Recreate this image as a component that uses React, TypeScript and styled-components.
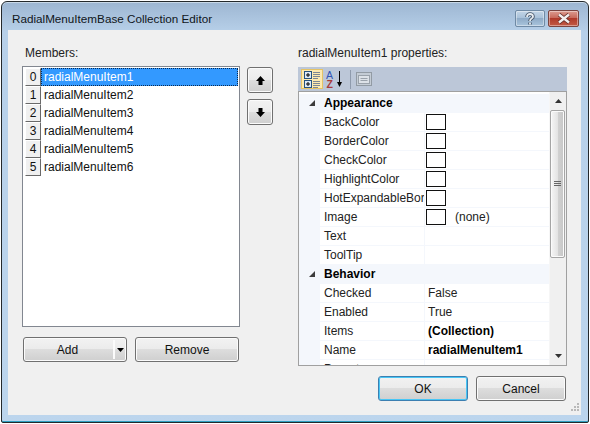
import React from "react";
import styled, { createGlobalStyle } from "styled-components";

const Global = createGlobalStyle`
  html, body { margin: 0; padding: 0; background: #fff; }
  body { width: 590px; height: 424px; overflow: hidden; font-family: "Liberation Sans", Arial, sans-serif; font-size: 12px; color: #000; }
  #root { padding: 1px; width: 588px; height: 422px; }
  * { box-sizing: border-box; }
`;

const Window = styled.div`
  width: 588px; height: 422px;
  display: flex; flex-direction: column;
  border: 1px solid #24292c;
  border-radius: 6px 6px 2px 2px;
  padding: 0 7px 7px 6px;
  background: linear-gradient(180deg, #9db6d2 0, #b7d0e9 30px, #bcd5ed 100%);
  box-shadow: inset 0 1px 0 #c9d9e8, inset 0 -1px 0 #2f9fc0;
`;
const TitleBar = styled.header`
  height: 28px; display: flex; align-items: flex-start; justify-content: space-between;
  padding: 0 0 0 4px;
`;
const Title = styled.h1`
  margin: 9px 0 0; font: 400 11.7px/15px "Liberation Sans", Arial, sans-serif; color: #10151a;
`;
const Caption = styled.div`
  display: flex; gap: 3px; margin-top: 8px; margin-right: 2px;
`;
const CaptionBtn = styled.div<{ $close?: boolean }>`
  width: ${p => (p.$close ? 31 : 30)}px; height: 17px; border-radius: 2px;
  border: 1px solid ${p => (p.$close ? "#7a4440" : "#6f8aa5")};
  box-shadow: inset 0 0 0 1px rgba(255,255,255,.4);
  background: ${p => p.$close
    ? "linear-gradient(180deg,#dc9c90 0,#c96a5c 45%,#b03a2a 50%,#c25a45 100%)"
    : "linear-gradient(180deg,#c3d5e6 0,#a9c2da 45%,#8fabc7 50%,#a9c4dc 100%)"};
  display: flex; align-items: center; justify-content: center;
`;

const Client = styled.main`
  position: relative; flex: 1; background: #f0f0f0; padding: 15px 14px 0;
  display: grid; grid-template-columns: 218px 26px 269px; column-gap: 7px;
  grid-template-rows: 21px auto;
`;
const Label = styled.div`
  padding-top: 1px; line-height: 14px; white-space: nowrap; color: #222;
`;
const MembersLabel = styled(Label)`
  padding-left: 3px;
`;
const LeftCol = styled.section`
  grid-row: 1 / 3; display: flex; flex-direction: column;
`;
const MidCol = styled.section`
  grid-row: 1 / 3; padding-top: 22px; display: flex; flex-direction: column; gap: 6px;
`;
const RightCol = styled.section`
  grid-row: 1 / 3; margin-left: 18px; width: 269px; display: flex; flex-direction: column;
`;
const ListBox = styled.div`
  margin-top: 6px; height: 261px; background: #fff; border: 1px solid #828790; padding: 1px;
`;
const ListRow = styled.div`
  display: flex; height: 18px;
`;
const RowHead = styled.div`
  width: 16px; height: 18px; background: #f0f0f0;
  border: 1px solid; border-color: #fff #696969 #696969 #fff;
  display: flex; align-items: center; justify-content: center; font-size: 12px; color: #111;
  margin-left: 1px;
`;
const ItemText = styled.div<{ $sel?: boolean }>`
  flex: 1; padding-left: 2px; line-height: 16px;
  border: 1px ${p => (p.$sel ? "dotted #0a2a50" : "solid transparent")};
  background: ${p => (p.$sel ? "#3399ff" : "transparent")};
  color: ${p => (p.$sel ? "#fff" : "#111")};
`;
const Btn = styled.button<{ $w?: number; $focus?: boolean }>`
  position: relative;
  width: ${p => p.$w ?? 90}px; height: 25px; padding: 0; margin: 0;
  font: 12px "Liberation Sans", Arial, sans-serif; color: #111;
  border: 1px solid ${p => (p.$focus ? "#3c7fb1" : "#707070")};
  border-radius: 3px;
  background: linear-gradient(180deg, #f2f2f2 0, #ebebeb 50%, #dddddd 50%, #cfcfcf 100%);
  box-shadow: inset 0 0 0 1px ${p => (p.$focus ? "#48c6f5" : "#fbfbfb")};
  display: flex; align-items: center; justify-content: center;
`;
const ArrowBtn = styled(Btn)`
  width: 26px; height: 26px;
`;
const ButtonRow = styled.div`
  margin-top: 10px; padding-left: 1px; display: flex; gap: 8px;
`;
const AddLabel = styled.span`
  padding-right: 15px;
`;
const SplitArea = styled.span`
  position: absolute; right: 1px; top: 2px; bottom: 2px; width: 12px;
  border-left: 2px solid #fbfbfb; display: flex; align-items: center; justify-content: center;
`;
const Toolbar = styled.div`
  margin-top: 7px; height: 25px; background: #bcc7d8; border-bottom: 1px solid #a0a0a0;
  display: flex; align-items: center; padding: 0 0 0 3px;
`;
const ToolActive = styled.div`
  width: 22px; height: 20px; background: #fdeab0; border: 1px solid #e5c365;
  display: flex; align-items: center; justify-content: center;
`;
const ToolIcon = styled.div`
  width: 24px; height: 21px; display: flex; align-items: center; justify-content: center;
`;
const ToolSep = styled.div`
  width: 1px; height: 19px; background: #8f9bad; margin: 0 1px 0 3px;
`;
const Grid = styled.div`
  height: 274px; display: flex; background: #fff; border: 1px solid #a0a0a0; border-top: 0; overflow: hidden;
`;
const Rows = styled.div`
  width: 251px; height: 100%; overflow: hidden; padding-top: 2px; background: #fff;
`;
const GridRow = styled.div`
  height: 19px; display: flex; align-items: stretch;
  background: #f4f7fc;
  padding-left: 21px;
`;
const CatRow = styled.div`
  height: 19px; display: flex; align-items: center; background: #f4f7fc; font-weight: 700; color: #000;
  padding-bottom: 2px;
`;
const CatArrow = styled.span`
  width: 25px; display: flex; justify-content: center; padding-top: 1px;
`;
const NameCell = styled.div`
  width: 104px; padding: 0 0 0 4px; margin-bottom: 1px; background: #fff; margin-right: 1px; line-height: 18px;
  white-space: nowrap; overflow: hidden; color: #222;
`;
const ValueCell = styled.div<{ $bold?: boolean }>`
  flex: 1; padding: 0 0 0 3px; margin-bottom: 1px; background: #fff; display: flex; align-items: center;
  font-weight: ${p => (p.$bold ? 700 : 400)}; color: ${p => (p.$bold ? "#000" : "#222")}; white-space: nowrap;
`;
const Swatch = styled.span`
  width: 20px; height: 16px; border: 1px solid #111; background: #fff; margin-left: -2px; margin-right: 9px; flex: none;
`;
const ScrollBar = styled.div`
  width: 17px; background: #f0f0f0; display: flex; flex-direction: column;
  border-left: 1px solid #f6f6f6;
`;
const ScrollArrow = styled.div`
  height: 18px; width: 100%; flex: none; display: flex; align-items: center; justify-content: center;
`;
const Thumb = styled.div`
  width: 15px; height: 148px; border: 1px solid #a5a5a5; border-radius: 2px;
  background: linear-gradient(90deg, #f6f6f6, #e4e4e4 50%, #d2d2d2 50%, #c6c6c6);
  box-shadow: inset 0 0 0 1px #fbfbfb;
  display: flex; align-items: center; justify-content: center;
`;
const Track = styled.div`
  flex: 1;
`;
const Footer = styled.div`
  margin-top: 10px; display: flex; justify-content: flex-end; gap: 8px; padding-right: 1px;
`;
const Grip = styled.svg`
  position: absolute; right: 1px; bottom: 1px;
`;

const Up = () => (
  <svg width="11" height="11" viewBox="0 0 11 11"><path d="M5.5 1 10 6H7.5v4h-4V6H1z" fill="#000" /></svg>
);
const Down = () => (
  <svg width="11" height="11" viewBox="0 0 11 11"><path d="M5.5 10 10 5H7.5V1h-4v4H1z" fill="#000" /></svg>
);
const Tri = () => (
  <svg width="8" height="8" viewBox="0 0 8 8"><path d="M7 1v6H1z" fill="#3c3c3c" /></svg>
);

const CategorizedIcon = () => (
  <svg width="17" height="17" viewBox="0 0 17 17">
    {[0, 9].map(y => (
      <g key={y}>
        <rect x="0.5" y={y + 0.5} width="7" height="7" fill="#dbe9f7" stroke="#24527f" />
        <path d={`M2 ${y + 4}h4M4 ${y + 2}v4`} stroke="#000" fill="none" />
        <path d={`M9 ${y + 1.5}h7M9 ${y + 3.5}h7M9 ${y + 5.5}h7M9 ${y + 7.5}h5`} stroke="#7d8894" fill="none" />
      </g>
    ))}
  </svg>
);
const SortIcon = () => (
  <svg width="18" height="19" viewBox="0 0 18 19">
    <text fontFamily="Liberation Sans" fontSize="10.5">
      <tspan x="0" y="8.5" fill="#2f55b5">A</tspan>
      <tspan x="0.5" y="18" fontWeight="700" fill="#a83a3a">Z</tspan>
    </text>
    <path d="M13.5 1v12" stroke="#000" strokeWidth="1" />
    <path d="M11 12h5l-2.5 5z" fill="#000" />
  </svg>
);
const PagesIcon = () => (
  <svg width="16" height="14" viewBox="0 0 16 14">
    <rect x="0.5" y="0.5" width="15" height="13" fill="#c4ccd5" stroke="#929ba4" />
    <rect x="2.5" y="3.5" width="11" height="8" fill="#dde2e8" stroke="#9aa2ab" />
    <path d="M4.5 6.5h7M4.5 8.5h7" stroke="#9aa2ab" fill="none" />
  </svg>
);

const items = [1, 2, 3, 4, 5, 6];
const appearance: [string, string | null][] = [
  ["BackColor", "s"], ["BorderColor", "s"], ["CheckColor", "s"], ["HighlightColor", "s"],
  ["HotExpandableBor", "s"], ["Image", "i"], ["Text", ""], ["ToolTip", ""],
];
const behavior: [string, string, boolean?][] = [
  ["Checked", "False"], ["Enabled", "True"], ["Items", "(Collection)", true],
  ["Name", "radialMenuItem1", true], ["Parent", "", false],
];

export default function App() {
  return (
    <>
      <Global />
      <Window>
        <TitleBar>
          <Title>RadialMenuItemBase Collection Editor</Title>
          <Caption>
            <CaptionBtn>
              <svg width="12" height="14" viewBox="0 0 12 14">
                <g fill="none" stroke="#48586a" strokeWidth="3.6">
                  <path d="M3 5C3 3 4.5 2 6 2S9 3 9 4.7 6 6.5 6 9" />
                  <path d="M6 10.5v2" />
                </g>
                <g fill="none" stroke="#e6ebf0" strokeWidth="1.8">
                  <path d="M3 5C3 3 4.5 2 6 2S9 3 9 4.7 6 6.5 6 9" />
                  <path d="M6 10.5v2" />
                </g>
              </svg>
            </CaptionBtn>
            <CaptionBtn $close>
              <svg width="16" height="11" viewBox="0 0 16 11">
                <path d="M3 1.5 13 9.5M13 1.5 3 9.5" stroke="#5c2a26" strokeWidth="4" />
                <path d="M3 1.5 13 9.5M13 1.5 3 9.5" stroke="#f3eeee" strokeWidth="2.4" />
              </svg>
            </CaptionBtn>
          </Caption>
        </TitleBar>
        <Client>
          <LeftCol>
            <MembersLabel>Members:</MembersLabel>
            <ListBox>
              {items.map((n, i) => (
                <ListRow key={n}>
                  <RowHead>{i}</RowHead>
                  <ItemText $sel={i === 0}>radialMenuItem{n}</ItemText>
                </ListRow>
              ))}
            </ListBox>
            <ButtonRow>
              <Btn $w={104}>
                <AddLabel>Add</AddLabel>
                <SplitArea>
                  <svg width="7" height="4" viewBox="0 0 7 4"><path d="M0 0h7L3.5 4z" fill="#000" /></svg>
                </SplitArea>
              </Btn>
              <Btn $w={104}>Remove</Btn>
            </ButtonRow>
          </LeftCol>
          <MidCol>
            <ArrowBtn><Up /></ArrowBtn>
            <ArrowBtn><Down /></ArrowBtn>
          </MidCol>
          <RightCol>
            <Label>radialMenuItem1 properties:</Label>
            <Toolbar>
              <ToolActive><CategorizedIcon /></ToolActive>
              <ToolIcon><SortIcon /></ToolIcon>
              <ToolSep />
              <ToolIcon><PagesIcon /></ToolIcon>
            </Toolbar>
            <Grid>
              <Rows>
                <CatRow><CatArrow><Tri /></CatArrow>Appearance</CatRow>
                {appearance.map(([n, v]) => (
                  <GridRow key={n}>
                    <NameCell>{n}</NameCell>
                    <ValueCell>
                      {v ? <Swatch /> : null}
                      {v === "i" ? "(none)" : ""}
                    </ValueCell>
                  </GridRow>
                ))}
                <CatRow><CatArrow><Tri /></CatArrow>Behavior</CatRow>
                {behavior.map(([n, v, b]) => (
                  <GridRow key={n}>
                    <NameCell>{n}</NameCell>
                    <ValueCell $bold={b}>{v}</ValueCell>
                  </GridRow>
                ))}
              </Rows>
              <ScrollBar>
                <ScrollArrow>
                  <svg width="7" height="4" viewBox="0 0 7 4"><path d="M3.5 0 7 4H0z" fill="#333" /></svg>
                </ScrollArrow>
                <Thumb>
                  <svg width="7" height="6" viewBox="0 0 7 6"><path d="M0 .5h7M0 2.5h7M0 4.5h7" stroke="#666" /></svg>
                </Thumb>
                <Track />
                <ScrollArrow>
                  <svg width="7" height="4" viewBox="0 0 7 4"><path d="M0 0h7L3.5 4z" fill="#333" /></svg>
                </ScrollArrow>
              </ScrollBar>
            </Grid>
            <Footer>
              <Btn $focus>OK</Btn>
              <Btn>Cancel</Btn>
            </Footer>
          </RightCol>
          <Grip width="12" height="12" viewBox="0 0 12 12">
            {[[9, 1], [6, 4], [9, 4], [3, 7], [6, 7], [9, 7]].map(([x, y]) => (
              <rect key={`${x}-${y}`} x={x} y={y} width="2" height="2" fill="#b8b8b8" />
            ))}
          </Grip>
        </Client>
      </Window>
    </>
  );
}
